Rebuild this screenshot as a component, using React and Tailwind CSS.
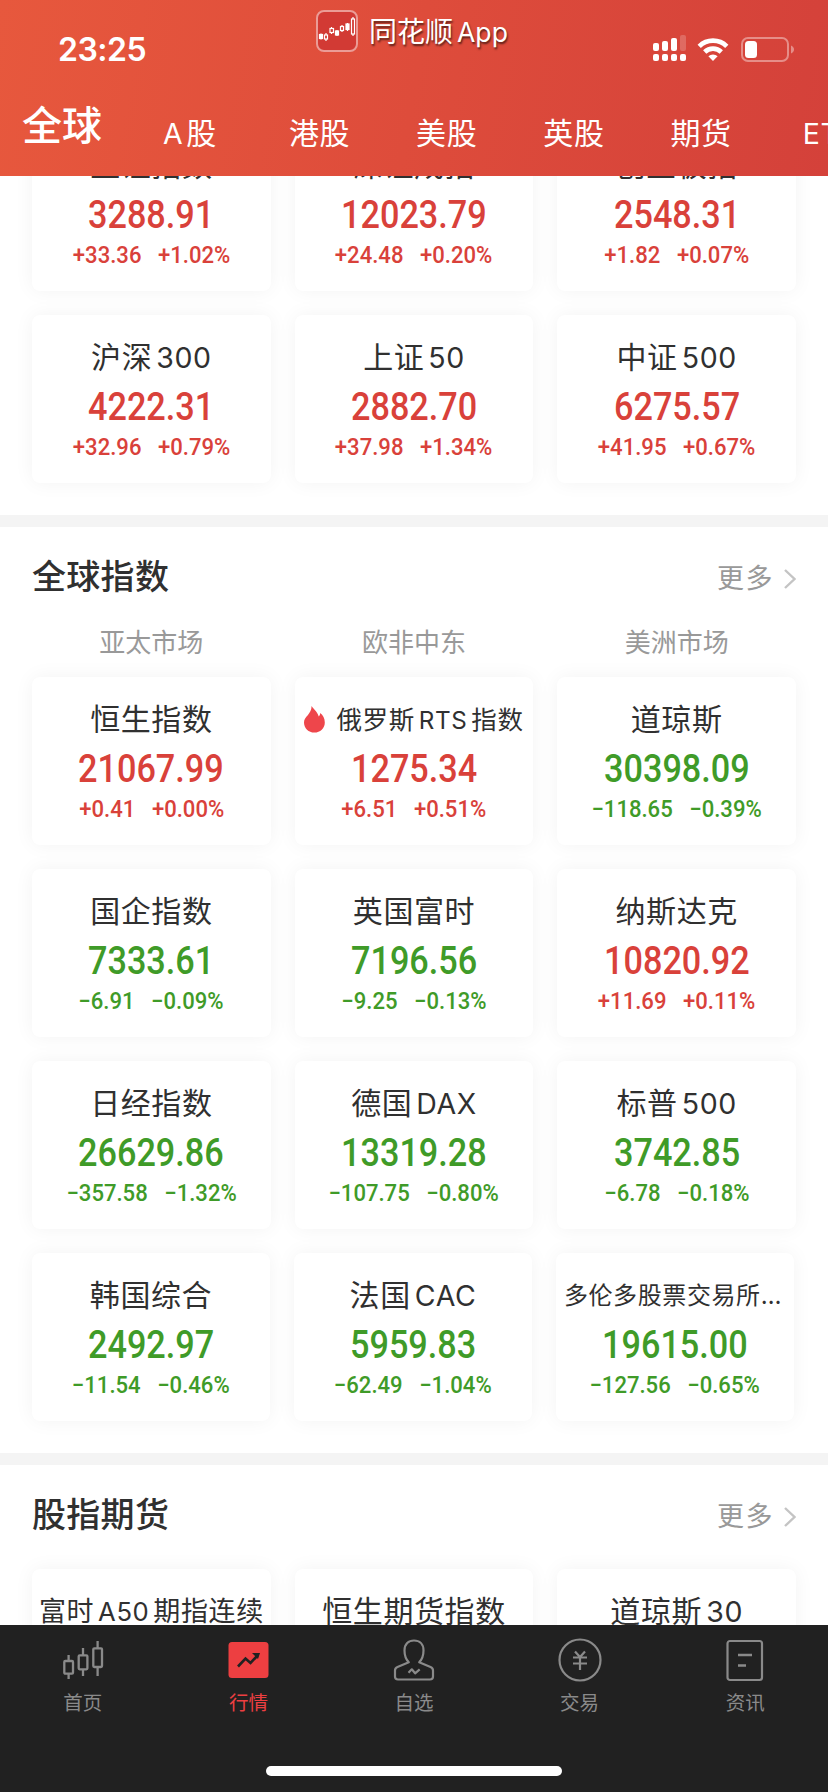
const CJK = "font-['Inter','Noto_Sans_CJK_SC',sans-serif]"

const tabs = [
  { name: 'A股', cls: 'ml-[61px]' },
  { name: '港股', cls: 'ml-[72px]' },
  { name: '美股', cls: 'ml-[66px]' },
  { name: '英股', cls: 'ml-[66px]' },
  { name: '期货', cls: 'ml-[66px]' },
  { name: 'ETF', cls: 'ml-[71px]' },
]

const cnIndexes = [
  { name: '上证指数', price: '3288.91', diff: '+33.36', pct: '+1.02%' },
  { name: '深证成指', price: '12023.79', diff: '+24.48', pct: '+0.20%' },
  { name: '创业板指', price: '2548.31', diff: '+1.82', pct: '+0.07%' },
  { name: '沪深300', price: '4222.31', diff: '+32.96', pct: '+0.79%' },
  { name: '上证50', price: '2882.70', diff: '+37.98', pct: '+1.34%' },
  { name: '中证500', price: '6275.57', diff: '+41.95', pct: '+0.67%' },
]

const globalIndexes = [
  { name: '恒生指数', price: '21067.99', diff: '+0.41', pct: '+0.00%' },
  { name: '俄罗斯RTS指数', price: '1275.34', diff: '+6.51', pct: '+0.51%', hot: true, size: 'text-[25.5px]' },
  { name: '道琼斯', price: '30398.09', diff: '−118.65', pct: '−0.39%' },
  { name: '国企指数', price: '7333.61', diff: '−6.91', pct: '−0.09%' },
  { name: '英国富时', price: '7196.56', diff: '−9.25', pct: '−0.13%' },
  { name: '纳斯达克', price: '10820.92', diff: '+11.69', pct: '+0.11%' },
  { name: '日经指数', price: '26629.86', diff: '−357.58', pct: '−1.32%' },
  { name: '德国DAX', price: '13319.28', diff: '−107.75', pct: '−0.80%' },
  { name: '标普500', price: '3742.85', diff: '−6.78', pct: '−0.18%' },
]

const globalLastRow = [
  { name: '韩国综合', price: '2492.97', diff: '−11.54', pct: '−0.46%' },
  { name: '法国CAC', price: '5959.83', diff: '−62.49', pct: '−1.04%' },
  { name: '多伦多股票交易所…', price: '19615.00', diff: '−127.56', pct: '−0.65%', size: 'text-[24px] pr-1' },
]

const futures = [
  { name: '富时A50期指连续', size: 'text-[27px]' },
  { name: '恒生期货指数' },
  { name: '道琼斯30' },
]

// Latin and digit runs get a little air next to Chinese characters
function MixedText({ text }) {
  return text.split(/([A-Za-z0-9]+)/).filter(Boolean).map((part, i) => (
    <span key={i} className={/^[A-Za-z0-9]/.test(part) ? (i === 0 ? 'mr-[3px] text-[0.95em] last:mr-0' : 'mx-1 text-[0.95em] last:mr-0') : ''}>{part}</span>
  ))
}

function Flame() {
  return (
    <svg className="mr-[11px] h-[27px] w-[21px] shrink-0" viewBox="0 0 21 27" fill="#ee464b">
      <path d="M7.600 0C8.500 2 13 5 14.800 10.400C15.600 9.800 16.200 8.600 16.200 7C19 9 20.800 12.600 20.800 16.400C20.800 22.400 16.200 26.500 10.400 26.500C4.600 26.500 0 22.200 0 16.400C0 10.400 7.500 8.500 7.600 0Z" />
    </svg>
  )
}

function IndexCard({ item }) {
  const color = item.diff?.startsWith('+') ? 'text-[#d9413a]' : 'text-[#3f9b28]'
  return (
    <div className="flex h-[168px] flex-col items-center rounded-lg bg-white pt-5 shadow-[0_0_20px_rgba(0,0,0,0.05)]">
      <div className={`flex h-11 items-center whitespace-nowrap tracking-[0.6px] text-[#303030] ${item.size || 'text-[30px]'}`}>
        {item.hot && <Flame />}
        <div className={item.size ? 'pt-[2px]' : ''}><MixedText text={item.name} /></div>
      </div>
      {item.price && (
        <>
          <div className={`mt-[1.5px] h-[52px] scale-x-90 font-[Roboto] text-[38px] leading-[52px] font-medium ${color}`}>{item.price}</div>
          <div className={`flex h-7 scale-x-92 gap-[18px] font-[Roboto] text-[24px] leading-7 font-medium ${color}`}>
            <span>{item.diff}</span>
            <span>{item.pct}</span>
          </div>
        </>
      )}
    </div>
  )
}

function SectionTitle({ title }) {
  return (
    <div className="flex h-[98px] items-center justify-between">
      <h2 className="text-[34px] font-medium tracking-[0.3px] text-[#303030]">{title}</h2>
      <div className="flex items-center pt-[6px] text-[27px] tracking-[1.5px] text-[#999]">
        更多
        <svg className="ml-[10px] h-5 w-3" viewBox="0 0 12 20" fill="none" stroke="#c4c4c4" strokeWidth="2.400">
          <path d="M1 1l9.500 9L1 19" />
        </svg>
      </div>
    </div>
  )
}

function StatusIcons() {
  return (
    <div className="mt-[34px] ml-auto flex items-center pr-[33px]">
      <svg className="h-[30px] w-[36px]" viewBox="0 0 36 30" fill="#fff">
        <rect x="1" y="9" width="6" height="8" rx="2" />
        <rect x="10" y="7" width="6" height="10" rx="2" />
        <rect x="19" y="4" width="6" height="13" rx="2" />
        <rect x="28" y="1" width="6" height="16" rx="2" opacity="0.2" />
        <rect x="1" y="20" width="6" height="7" rx="2" />
        <rect x="10" y="20" width="6" height="7" rx="2" />
        <rect x="19" y="20" width="6" height="7" rx="2" />
        <rect x="28" y="20" width="6" height="7" rx="2" />
      </svg>
      <svg className="ml-[9px] h-[30px] w-[32px]" viewBox="0 0 32 30" fill="none" stroke="#fff" strokeWidth="4.600">
        <path d="M2.200 12.300a19.500 19.500 0 0 1 27.600 0" />
        <path d="M7.700 18a11.800 11.800 0 0 1 16.600 0" />
        <path d="M16 27l-4.600-4.700a6.600 6.600 0 0 1 9.200 0z" fill="#fff" stroke="none" />
      </svg>
      <svg className="ml-[12px] h-[30px] w-[54px]" viewBox="0 0 54 30">
        <rect x="1" y="4" width="46" height="23" rx="6" fill="none" stroke="#fff" strokeOpacity="0.4" strokeWidth="2" />
        <rect x="4" y="7" width="12" height="17" rx="3.500" fill="#fff" />
        <path d="M50 11.500c4 1.500 4 6.500 0 8z" fill="#fff" fillOpacity="0.4" />
      </svg>
    </div>
  )
}

function Header() {
  return (
    <header className="relative z-10 flex h-[176px] shrink-0 flex-col bg-linear-[100deg,#e7583d,#de4c3b_50%,#d4413a] text-white">
      <div className="flex h-[88px] items-start">
        <div className="mt-[30px] ml-[58px] w-[258px] text-[32px] leading-10 font-semibold tracking-[-0.5px]">23:25</div>
        <div className="mt-[10px] flex items-center">
          <svg className="h-[42px] w-[42px]" viewBox="0 0 42 42" fill="none" stroke="#fff" strokeWidth="1.200">
            <rect x="1" y="1" width="40" height="40" rx="7" fill="#d23a34" stroke="#eb9c96" strokeWidth="2" />
            <path d="M5 23.500v6M10 23v8M15.500 17v7M21 20v6M26 15v7M31.500 13v8M37 7v19" />
            <rect x="3.500" y="24.500" width="3" height="4" fill="#fff" />
            <rect x="8.500" y="25" width="3" height="4" fill="#d23a34" />
            <rect x="14" y="18.500" width="3.500" height="4" fill="#d23a34" />
            <rect x="19.500" y="21" width="3" height="4" fill="#fff" />
            <rect x="24.500" y="16.500" width="3" height="4" fill="#d23a34" />
            <rect x="30" y="14" width="3" height="5.500" fill="#fff" />
            <rect x="35.500" y="9" width="3" height="15" fill="#d23a34" />
          </svg>
          <div className="mt-[2px] ml-[11px] text-[28px] leading-10 [text-shadow:1px_2px_2px_rgba(0,0,0,0.6)]">
            <MixedText text="同花顺App" />
          </div>
        </div>
        <StatusIcons />
      </div>
      <nav className="flex h-[88px] items-start overflow-hidden pl-[22px] whitespace-nowrap">
        <span className="text-[40px] leading-[76px] font-medium">全球</span>
        {tabs.map((t) => (
          <span key={t.name} className={`pt-[7px] text-[30px] leading-[76px] tracking-[0.6px] ${t.cls}`}><MixedText text={t.name} /></span>
        ))}
      </nav>
    </header>
  )
}

const navItems = [
  {
    label: '首页',
    icon: (
      <g stroke="#8a8a8a" strokeWidth="2.300">
        <rect x="2.300" y="23" width="8.700" height="12.700" rx="1" />
        <rect x="16.700" y="17.300" width="8.700" height="14" rx="1" />
        <rect x="31.300" y="10.300" width="8.700" height="18.700" rx="1" />
        <path d="M6.600 17v6M6.600 36v5M21 10v7M21 32v6M35.600 3v7M35.600 29v9" />
      </g>
    ),
  },
  {
    label: '行情',
    active: true,
    icon: (
      <g>
        <rect x="1.500" y="4" width="40" height="36" rx="3.500" fill="#ed3f41" />
        <path d="M11 28.500l7.500-8 5 4.500 7-7.500" stroke="#212121" strokeWidth="2.600" />
        <path d="M25 15h8l-2 6z" fill="#212121" />
      </g>
    ),
  },
  {
    label: '自选',
    icon: (
      <g stroke="#8a8a8a" strokeWidth="2.200" strokeLinejoin="round">
        <path d="M15.800 24.300C12.500 21 11.500 17 11.500 12.500C11.500 6 15.500 2.500 21 2.500S30.500 6 30.500 12.500C30.500 17 29.500 21 26.200 24.300L37.500 29Q40 30 40 32.500V38.500Q40 41.500 37 41.500H5Q2 41.500 2 38.500V32.500Q2 30 4.500 29Z" />
        <path d="M15.500 34.700l3.300-3.400 3.300 4 4.600-4" />
      </g>
    ),
  },
  {
    label: '交易',
    icon: (
      <g stroke="#8a8a8a" strokeWidth="2.200">
        <circle cx="21" cy="22" r="20.500" />
        <path d="M16 13.500l5 5.500 5-5.500M14 19.500h14M14 25.500h14M21 19v13" />
      </g>
    ),
  },
  {
    label: '资讯',
    icon: (
      <g stroke="#8a8a8a" strokeWidth="2.200">
        <rect x="3.500" y="3" width="34.500" height="39" rx="2.500" />
        <path d="M14 17h14M14 27.500h8" strokeWidth="2.400" />
      </g>
    ),
  },
]

function BottomNav() {
  return (
    <footer className="relative z-10 flex h-[167px] shrink-0 flex-col items-center bg-[#212121]">
      <div className="grid w-full grid-cols-5">
        {navItems.map((item) => (
          <div key={item.label} className={`flex flex-col items-center pt-[13px] text-[19.5px] ${item.active ? 'text-[#ed3f41]' : 'text-[#8a8a8a]'}`}>
            <svg className="h-[44px] w-[42px] overflow-visible" viewBox="0 0 42 44" fill="none">{item.icon}</svg>
            <span className="mt-[6px] leading-[30px]">{item.label}</span>
          </div>
        ))}
      </div>
      <div className="mt-auto mb-4 h-[10px] w-[296px] rounded-full bg-white" />
    </footer>
  )
}

export default function App() {
  return (
    <div className={`flex h-[1792px] w-[828px] flex-col overflow-hidden bg-white ${CJK}`}>
      <Header />
      <main className="flex min-h-0 flex-1 flex-col overflow-hidden">
        <section className="-mt-[53px] grid shrink-0 grid-cols-3 gap-6 px-8 pb-8">
          {cnIndexes.map((item) => <IndexCard key={item.name} item={item} />)}
        </section>
        <div className="h-3 shrink-0 bg-[#f4f4f4]" />
        <section className="shrink-0 px-8 pb-8">
          <SectionTitle title="全球指数" />
          <div className="grid h-[52px] grid-cols-3 gap-6 text-center text-[26px] leading-[35px] text-[#999]">
            <span>亚太市场</span>
            <span>欧非中东</span>
            <span>美洲市场</span>
          </div>
          <div className="grid grid-cols-3 gap-6">
            {globalIndexes.map((item) => <IndexCard key={item.name} item={item} />)}
          </div>
          <div className="mt-6 mr-[2px] grid grid-cols-3 gap-6">
            {globalLastRow.map((item) => <IndexCard key={item.name} item={item} />)}
          </div>
        </section>
        <div className="h-3 shrink-0 bg-[#f4f4f4]" />
        <section className="shrink-0 px-8">
          <SectionTitle title="股指期货" />
          <div className="mt-[6px] grid grid-cols-3 gap-6">
            {futures.map((item) => <IndexCard key={item.name} item={item} />)}
          </div>
        </section>
      </main>
      <BottomNav />
    </div>
  )
}
